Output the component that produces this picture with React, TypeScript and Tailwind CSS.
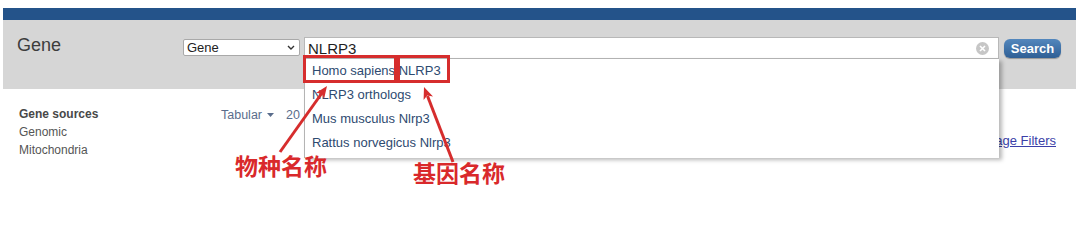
import React from "react";

export default function App() {
  const items = [
    "Homo sapiens NLRP3",
    "NLRP3 orthologs",
    "Mus musculus Nlrp3",
    "Rattus norvegicus Nlrp3",
  ];
  return (
    <div className="relative w-[1079px] h-[246px] bg-white overflow-hidden font-['Liberation_Sans',Arial,sans-serif]">
      {/* header */}
      <div className="relative z-10 pt-2 px-[3px]">
        <div className="h-3 bg-[#24538a]" />
        <div className="h-[69px] bg-[#d6d6d6] flex items-start pt-[17px] pl-[14px]">
          <div className="w-[166px] mt-[-3px] text-[18px] leading-[22px] text-[#3d3d3d]">Gene</div>
          <div className="mt-[2px] w-[117px] h-[17px] bg-white border border-[#a9a9a9] rounded-[2px] flex items-center justify-between pl-[3px] pr-[4px]">
            <span className="text-[13px] leading-none text-[#222]">Gene</span>
            <svg width="8" height="5" viewBox="0 0 8 5">
              <path d="M1 1 L4 4 L7 1" fill="none" stroke="#333" strokeWidth="1.4" />
            </svg>
          </div>
          <div className="relative ml-[4px] w-[695px] h-[22px] bg-white border border-[#b8b8b8] flex items-center pl-[3px]">
            <span className="flex-1 text-[15px] leading-none text-[#1e1e1e]">NLRP3</span>
            <span className="mr-[9px] w-[13px] h-[13px] rounded-full bg-[#c6c6c6] flex items-center justify-center">
              <svg width="7" height="7" viewBox="0 0 7 7">
                <path d="M1 1 L6 6 M6 1 L1 6" stroke="white" strokeWidth="1.6" />
              </svg>
            </span>
            <div className="absolute left-[-1px] top-[21px] w-[695px] h-[99px] bg-white border-l border-[#b4b4b4] shadow-[3px_2px_4px_rgba(0,0,0,0.28)]">
              {items.map((t) => (
                <div key={t} className="h-6 leading-6 pl-[7px] text-[13px] text-[#2e4a70]">
                  {t}
                </div>
              ))}
            </div>
          </div>
          <div className="ml-[5px] mt-[2px] w-[57px] h-[19px] rounded-[6px] bg-gradient-to-b from-[#5387bd] to-[#2f5f95] shadow-[0_1px_1px_rgba(0,0,0,0.3)] flex items-center justify-center text-white font-bold text-[13px] leading-none">
            Search
          </div>
        </div>
      </div>

      {/* body */}
      <div className="relative z-0 flex pt-4">
        <div className="w-[221px] pl-[19px] text-[12px] leading-[18px] text-[#555]">
          <div className="font-bold text-[#484848]">Gene sources</div>
          <div>Genomic</div>
          <div>Mitochondria</div>
        </div>
        <div className="flex-1 pr-[23px]">
          <div className="mt-px flex items-center text-[12.5px] leading-[18px] text-[#5a6d8c]">
            <span>Tabular</span>
            <svg className="ml-[5px]" width="7" height="4" viewBox="0 0 7 4">
              <path d="M0 0 L7 0 L3.5 4 Z" fill="#5a6d8c" />
            </svg>
            <span className="ml-[12px]">20</span>
          </div>
          <div className="mt-2 flex justify-end">
            <span className="text-[13px] leading-[18px] text-[#3b3fa8] underline">Manage Filters</span>
          </div>
        </div>
      </div>

      {/* annotations */}
      <div className="absolute z-20 left-[303px] top-[55px] w-[94px] h-[28px] border-[3px] border-[#d62d2d]" />
      <div className="absolute z-20 left-[397px] top-[55px] w-[53px] h-[28px] border-[3px] border-[#d62d2d]" />
      <svg className="absolute z-20 left-0 top-0 pointer-events-none" width="1079" height="246" viewBox="0 0 1079 246">
        <line x1="280" y1="152" x2="322" y2="93" stroke="#d62d2d" strokeWidth="3" />
        <polygon points="327,86 324.1,98.7 321.8,93.3 315.9,92.9" fill="#d62d2d" />
        <line x1="453" y1="162" x2="427.5" y2="96" stroke="#d62d2d" strokeWidth="3" />
        <polygon points="424,87 433,96.4 427.2,95.4 423.6,100" fill="#d62d2d" />
      </svg>
      <div className="absolute z-20 left-[235px] top-[153px] text-[23px] leading-[24px] font-bold text-[#d9292b] font-['Noto_Sans_CJK_SC',sans-serif]">
        物种名称
      </div>
      <div className="absolute z-20 left-[413px] top-[160px] text-[23px] leading-[24px] font-bold text-[#d9292b] font-['Noto_Sans_CJK_SC',sans-serif]">
        基因名称
      </div>
    </div>
  );
}
